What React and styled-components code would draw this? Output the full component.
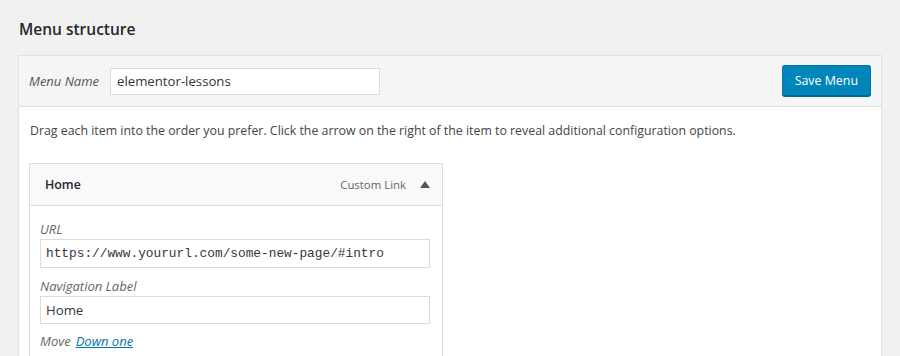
import React from 'react';
import styled, { createGlobalStyle } from 'styled-components';

const Global = createGlobalStyle`
  html, body {
    margin: 0;
    padding: 0;
    background: #f1f1f1;
    font-family: "Open Sans", "Noto Sans", sans-serif;
    color: #444;
    overflow: hidden;
  }
`;

const Page = styled.div`
  width: 900px;
  height: 356px;
  padding: 0 18px 0 18px;
  box-sizing: border-box;
  overflow: hidden;
`;

const Title = styled.h2`
  margin: 0;
  padding: 17px 0 0 1px;
  height: 38px;
  font-size: 15.5px;
  font-weight: 600;
  color: #23282d;
  line-height: 24px;
`;

const Panel = styled.div`
  border: 1px solid #e1e1e1;
  background: #fff;
  height: 320px;
`;

const PanelHead = styled.div`
  display: flex;
  align-items: center;
  justify-content: space-between;
  height: 50px;
  padding: 0 10px 0 10px;
  background: #f5f5f5;
  border-bottom: 1px solid #dedede;
`;

const NameGroup = styled.label`
  display: flex;
  align-items: center;
  gap: 11px;
  font-size: 13px;
  font-style: italic;
  color: #555;
`;

const TextInput = styled.div`
  box-sizing: border-box;
  width: ${p => p.$w}px;
  height: ${p => p.$h || 27}px;
  padding: 0 ${p => p.$pad || 6}px;
  display: flex;
  align-items: center;
  background: #fff;
  border: 1px solid #dcdcdc;
  font-style: normal;
  font-size: ${p => (p.$mono ? '12.8px' : '13.2px')};
  font-family: ${p => (p.$mono ? '"Liberation Mono", "DejaVu Sans Mono", monospace' : 'inherit')};
  color: #32373c;
  white-space: nowrap;
`;

const SaveButton = styled.button`
  box-sizing: border-box;
  height: 31px;
  padding: 0 12px;
  background: #0085ba;
  border: 1px solid #0073aa;
  border-bottom-color: #006799;
  border-radius: 3px;
  box-shadow: 0 1px 0 #006799;
  color: #fff;
  font-family: inherit;
  font-size: 12.4px;
  margin-top: -1px;
`;

const PanelBody = styled.div`
  padding: 14px 10px 0 10px;
`;

const Hint = styled.p`
  margin: 0 0 23px 1px;
  font-size: 12.35px;
  line-height: 19px;
  color: #444;
`;

const Item = styled.div`
  width: 414px;
  box-sizing: border-box;
  border: 1px solid #dcdcdc;
  border-bottom: none;
  height: 200px;
`;

const ItemHead = styled.div`
  display: flex;
  align-items: center;
  height: 41px;
  padding: 0 12px 0 15px;
  background: #f9f9f9;
  border-bottom: 1px solid #dcdcdc;
`;

const ItemTitle = styled.span`
  flex: 1;
  font-size: 12.4px;
  font-weight: 600;
  color: #23282d;
`;

const ItemType = styled.span`
  font-size: 11.4px;
  color: #666;
  margin-right: 14px;
`;

const ItemBody = styled.div`
  padding: 15px 12px 0 10px;
  display: flex;
  flex-direction: column;
`;

const FieldLabel = styled.span`
  font-size: 13px;
  font-style: italic;
  color: #666;
  line-height: 17px;
  margin-bottom: 1px;
`;

const Field = styled.div`
  display: flex;
  flex-direction: column;
  margin-bottom: ${p => p.$gap || 8}px;
`;

const MoveRow = styled.div`
  font-size: 13px;
  font-style: italic;
  color: #666;
  line-height: 17px;
  display: flex;
  gap: 5px;
`;

const MoveLink = styled.a`
  color: #0073aa;
  text-decoration: underline;
`;

const Arrow = () => (
  <svg width="10" height="7" viewBox="0 0 10 7">
    <path d="M5 0 L10 7 L0 7 Z" fill="#555" />
  </svg>
);

export default function App() {
  return (
    <Page>
      <Global />
      <Title>Menu structure</Title>
      <Panel>
        <PanelHead>
          <NameGroup>
            Menu Name
            <TextInput $w={270}>elementor-lessons</TextInput>
          </NameGroup>
          <SaveButton>Save Menu</SaveButton>
        </PanelHead>
        <PanelBody>
          <Hint>
            Drag each item into the order you prefer. Click the arrow on the right of the item to reveal additional configuration options.
          </Hint>
          <Item>
            <ItemHead>
              <ItemTitle>Home</ItemTitle>
              <ItemType>Custom Link</ItemType>
              <Arrow />
            </ItemHead>
            <ItemBody>
              <Field $gap={10}>
                <FieldLabel>URL</FieldLabel>
                <TextInput $w={390} $h={29} $pad={5} $mono>
                  https://www.yoururl.com/some-new-page/#intro
                </TextInput>
              </Field>
              <Field $gap={9}>
                <FieldLabel>Navigation Label</FieldLabel>
                <TextInput $w={390} $h={28} $pad={5}>Home</TextInput>
              </Field>
              <MoveRow>
                Move <MoveLink href="#">Down one</MoveLink>
              </MoveRow>
            </ItemBody>
          </Item>
        </PanelBody>
      </Panel>
    </Page>
  );
}
